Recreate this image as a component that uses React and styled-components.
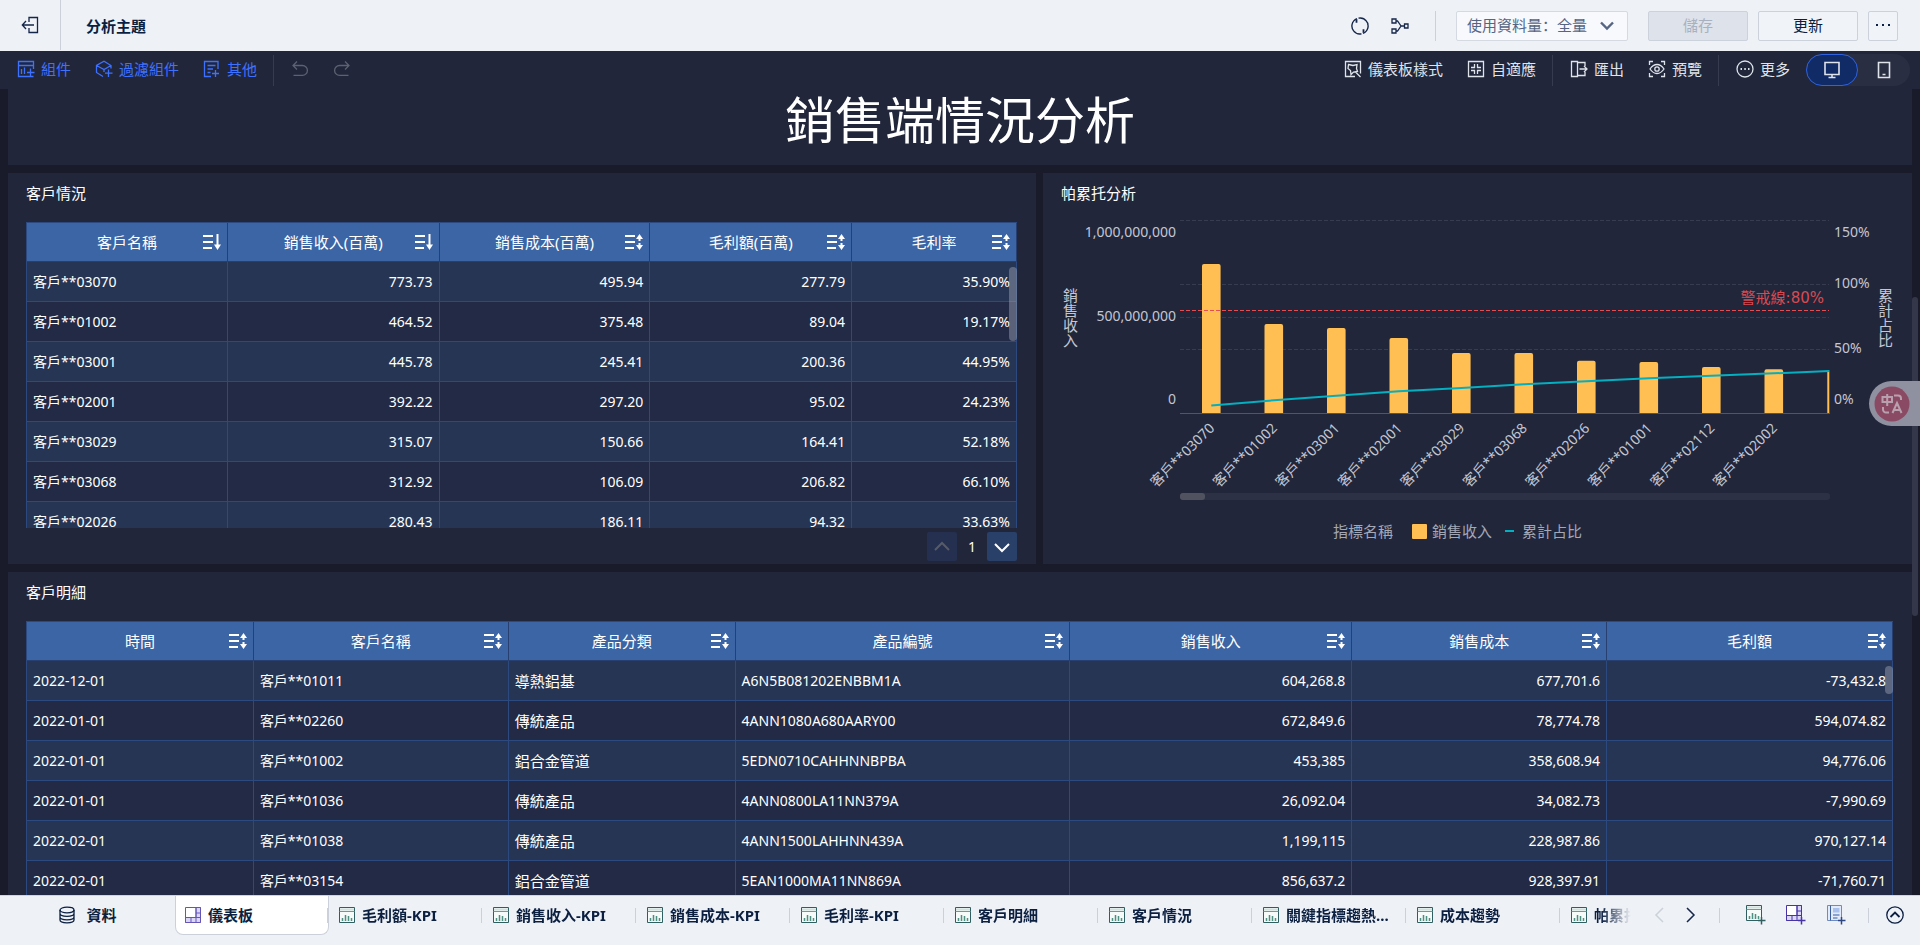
import styled, { createGlobalStyle } from "styled-components";

const customerColumns = [
  { label: "客戶名稱", width: 201, sort: "down" },
  { label: "銷售收入(百萬)", width: 212, sort: "down", number: true },
  { label: "銷售成本(百萬)", width: 211, sort: "both", number: true },
  { label: "毛利額(百萬)", width: 202, sort: "both", number: true },
  { label: "毛利率", width: 165, sort: "both", number: true },
];

const customerRows = [
  ["客戶**03070", "773.73", "495.94", "277.79", "35.90%"],
  ["客戶**01002", "464.52", "375.48", "89.04", "19.17%"],
  ["客戶**03001", "445.78", "245.41", "200.36", "44.95%"],
  ["客戶**02001", "392.22", "297.20", "95.02", "24.23%"],
  ["客戶**03029", "315.07", "150.66", "164.41", "52.18%"],
  ["客戶**03068", "312.92", "106.09", "206.82", "66.10%"],
  ["客戶**02026", "280.43", "186.11", "94.32", "33.63%"],
];

const detailColumns = [
  { label: "時間", width: 227, sort: "both" },
  { label: "客戶名稱", width: 255, sort: "both" },
  { label: "產品分類", width: 227, sort: "both", large: true },
  { label: "產品編號", width: 335, sort: "both" },
  { label: "銷售收入", width: 282, sort: "both", number: true },
  { label: "銷售成本", width: 255, sort: "both", number: true },
  { label: "毛利額", width: 286, sort: "both", number: true },
];

const detailRows = [
  ["2022-12-01", "客戶**01011", "導熱鋁基", "A6N5B081202ENBBM1A", "604,268.8", "677,701.6", "-73,432.8"],
  ["2022-01-01", "客戶**02260", "傳統產品", "4ANN1080A680AARY00", "672,849.6", "78,774.78", "594,074.82"],
  ["2022-01-01", "客戶**01002", "鋁合金管道", "5EDN0710CAHHNNBPBA", "453,385", "358,608.94", "94,776.06"],
  ["2022-01-01", "客戶**01036", "傳統產品", "4ANN0800LA11NN379A", "26,092.04", "34,082.73", "-7,990.69"],
  ["2022-02-01", "客戶**01038", "傳統產品", "4ANN1500LAHHNN439A", "1,199,115", "228,987.86", "970,127.14"],
  ["2022-02-01", "客戶**03154", "鋁合金管道", "5EAN1000MA11NN869A", "856,637.2", "928,397.91", "-71,760.71"],
];

// top = bar top, line = cumulative share, both in chart units
const pareto = [
  { name: "客戶**03070", top: 51, line: 192.5 },
  { name: "客戶**01002", top: 111, line: 187.3 },
  { name: "客戶**03001", top: 115, line: 182.7 },
  { name: "客戶**02001", top: 125, line: 178.3 },
  { name: "客戶**03029", top: 140, line: 175 },
  { name: "客戶**03068", top: 140, line: 171.3 },
  { name: "客戶**02026", top: 147.7, line: 168.3 },
  { name: "客戶**01001", top: 149, line: 165.3 },
  { name: "客戶**02112", top: 154, line: 162.8 },
  { name: "客戶**02002", top: 156.3, line: 160.3 },
];

const tabs = [
  "毛利額-KPI",
  "銷售收入-KPI",
  "銷售成本-KPI",
  "毛利率-KPI",
  "客戶明細",
  "客戶情況",
  "關鍵指標趨熱...",
  "成本趨勢",
  "帕累托分析",
];

export default function App() {
  return (
    <Page>
      <GlobalStyle />
      <Header>
        <BackButton aria-label="返回">
          <BackIcon />
        </BackButton>
        <PageTitle>分析主題</PageTitle>
        <HeaderActions>
          <IconButton aria-label="重新整理">
            <RefreshIcon />
          </IconButton>
          <IconButton aria-label="血緣">
            <FlowIcon />
          </IconButton>
          <HeaderDivider />
          <SelectBox>
            <Select aria-label="使用資料量" defaultValue="all">
              <option value="all">使用資料量：全量</option>
            </Select>
            <SelectArrow viewBox="0 0 18 18">
              <path d="M3 5.5l6 6 6-6" />
            </SelectArrow>
          </SelectBox>
          <HeaderButton $width={100} disabled>
            儲存
          </HeaderButton>
          <HeaderButton $width={100}>更新</HeaderButton>
          <HeaderButton $width={30} aria-label="更多操作">
            <DotsIcon />
          </HeaderButton>
        </HeaderActions>
      </Header>

      <Toolbar>
        <ToolGroup>
          <ToolButton $accent>
            <WidgetIcon />
            組件
          </ToolButton>
          <ToolButton $accent>
            <FilterIcon />
            過濾組件
          </ToolButton>
          <ToolButton $accent>
            <OtherIcon />
            其他
          </ToolButton>
        </ToolGroup>
        <ToolDivider />
        <ToolGroup>
          <ToolButton $muted aria-label="復原">
            <UndoIcon />
          </ToolButton>
          <ToolButton $muted aria-label="重做">
            <RedoIcon />
          </ToolButton>
        </ToolGroup>
        <Spacer />
        <ToolGroup>
          <ToolButton>
            <StyleIcon />
            儀表板樣式
          </ToolButton>
          <ToolButton>
            <FitIcon />
            自適應
          </ToolButton>
        </ToolGroup>
        <ToolDivider />
        <ToolGroup>
          <ToolButton>
            <ExportIcon />
            匯出
          </ToolButton>
          <ToolButton>
            <PreviewIcon />
            預覽
          </ToolButton>
        </ToolGroup>
        <ToolDivider />
        <ToolButton>
          <MoreIcon />
          更多
        </ToolButton>
        <DeviceSwitch>
          <DeviceButton $active aria-label="電腦">
            <MonitorIcon />
          </DeviceButton>
          <DeviceButton aria-label="手機">
            <PhoneIcon />
          </DeviceButton>
        </DeviceSwitch>
      </Toolbar>

      <Canvas>
        <Banner>
          <BannerTitle>銷售端情況分析</BannerTitle>
        </Banner>
        <Row>
          <Panel>
            <PanelTitle>客戶情況</PanelTitle>
            <PanelBody>
              <TableClip>
                <DataTable columns={customerColumns} rows={customerRows} />
                <Thumb $length={74} />
              </TableClip>
              <Pager>
                <PagerButton disabled aria-label="上一頁">
                  <svg viewBox="0 0 18 18">
                    <path d="M2 12l7-7 7 7" />
                  </svg>
                </PagerButton>
                <PagerNumber>1</PagerNumber>
                <PagerButton aria-label="下一頁">
                  <svg viewBox="0 0 18 18">
                    <path d="M2 6l7 7 7-7" />
                  </svg>
                </PagerButton>
              </Pager>
            </PanelBody>
          </Panel>
          <Panel>
            <PanelTitle>帕累托分析</PanelTitle>
            <ParetoChart />
          </Panel>
        </Row>
        <Panel>
          <PanelTitle>客戶明細</PanelTitle>
          <PanelBody>
            <TableFrame>
              <DataTable columns={detailColumns} rows={detailRows} />
              <Thumb $length={28} />
            </TableFrame>
          </PanelBody>
        </Panel>
        <PageThumb />
        <TranslateButton aria-label="翻譯">
          <TranslateIcon />
        </TranslateButton>
      </Canvas>

      <Footer>
        <DataTab>
          <DatabaseIcon />
          資料
        </DataTab>
        <TabList>
          <Tab $active>
            <DashboardIcon />
            儀表板
          </Tab>
          {tabs.map((tab) => {
            return (
              <Tab key={tab}>
                <ChartIcon />
                {tab}
              </Tab>
            );
          })}
        </TabList>
        <FooterTools>
          <FooterButton $disabled aria-label="向左">
            <svg width="18" height="18" viewBox="0 0 18 18">
              <path d="M12 2L5 9l7 7" />
            </svg>
          </FooterButton>
          <FooterButton aria-label="向右">
            <svg width="18" height="18" viewBox="0 0 18 18">
              <path d="M6 2l7 7-7 7" />
            </svg>
          </FooterButton>
        </FooterTools>
        <FooterDivider />
        <FooterTools $wide>
          <FooterButton aria-label="新增組件">
            <ChartIcon plus />
          </FooterButton>
          <FooterButton aria-label="新增儀表板">
            <DashboardIcon plus />
          </FooterButton>
          <FooterButton aria-label="新增報告">
            <ReportIcon />
          </FooterButton>
        </FooterTools>
        <FooterDivider />
        <CollapseButton aria-label="收起">
          <CollapseIcon />
        </CollapseButton>
      </Footer>
    </Page>
  );
}

function DataTable({ columns, rows }) {
  const total = columns.reduce((sum, column) => sum + column.width, 0);
  return (
    <Table>
      <colgroup>
        {columns.map((column) => {
          return <Col key={column.label} $share={(column.width / total) * 100} />;
        })}
      </colgroup>
      <thead>
        <tr>
          {columns.map((column) => {
            return (
              <HeadCell key={column.label}>
                <HeadContent>
                  <span />
                  <span>{column.label}</span>
                  <SortButton aria-label="排序">
                    <SortIcon type={column.sort} />
                  </SortButton>
                </HeadContent>
              </HeadCell>
            );
          })}
        </tr>
      </thead>
      <tbody>
        {rows.map((row, index) => {
          return (
            <BodyRow key={index}>
              {row.map((value, i) => {
                return (
                  <Cell key={i} $number={columns[i].number} $large={columns[i].large}>
                    {value}
                  </Cell>
                );
              })}
            </BodyRow>
          );
        })}
      </tbody>
    </Table>
  );
}

function ParetoChart() {
  const center = (index) => 168.3 + index * 62.5;
  const points = pareto.map((item, i) => `${center(i)},${item.line}`).join(" ");
  return (
    <Chart viewBox="0 0 869 351" role="img" aria-label="帕累托分析">
      {[7.5, 71.5, 104.5, 136.5].map((y) => {
        return <line key={y} className="grid" x1="137" x2="786" y1={y} y2={y} />;
      })}
      <line className="axis" x1="137" x2="787" y1="200.5" y2="200.5" />
      {pareto.map((item, i) => {
        return (
          <path
            key={item.name}
            fill="#ffbf52"
            d={`M${center(i) - 9.3} 200V${item.top + 2}q0-2 2-2h14.6q2 0 2 2V200z`}
          />
        );
      })}
      <rect x="784.3" y="159" width="2" height="41" fill="#ffbf52" />
      <polyline className="line" points={`${points} 786.5,158`} />
      <line className="warn" x1="137" x2="786" y1="97.5" y2="97.5" />
      <text className="warnText" x="781" y="90" textAnchor="end">
        警戒線:80%
      </text>

      <text x="133" y="24" textAnchor="end">1,000,000,000</text>
      <text x="133" y="108" textAnchor="end">500,000,000</text>
      <text x="133" y="191" textAnchor="end">0</text>
      <text x="791" y="24">150%</text>
      <text x="791" y="75">100%</text>
      <text x="791" y="140">50%</text>
      <text x="791" y="191">0%</text>
      <text className="name" x="27" y="75">銷售收入</text>
      <text className="name" x="842" y="75">累計占比</text>

      {pareto.map((item, i) => {
        const x = center(i) + 4;
        return (
          <text key={item.name} x={x} y="216" textAnchor="end" transform={`rotate(-45 ${x} 216)`}>
            {item.name}
          </text>
        );
      })}

      <rect x="137" y="280" width="650" height="7" rx="3" fill="#2d3145" />
      <rect x="137" y="280" width="25" height="7" rx="3" fill="#50535f" />

      <text className="legend" x="290" y="324">指標名稱</text>
      <rect x="369" y="311" width="15" height="15" rx="1" fill="#ffbf52" />
      <text className="legend" x="389" y="324">銷售收入</text>
      <line className="line" x1="462" x2="471" y1="318" y2="318" />
      <text className="legend" x="479" y="324">累計占比</text>
    </Chart>
  );
}

function SortIcon({ type }) {
  return (
    <svg width="18" height="18" viewBox="0 0 18 18" fill="none" stroke="#fff" strokeWidth="2">
      <path d="M0 3h10M0 9h10M0 15h9" />
      {type === "down" ? (
        <>
          <path d="M14.500 1v12" />
          <path d="M11 11.500h7L14.500 17z" fill="#fff" stroke="none" />
        </>
      ) : (
        <>
          <path d="M14.500 5v3M14.500 10v3" />
          <path d="M11 6h7L14.500 1zM11 12h7L14.500 17z" fill="#fff" stroke="none" />
        </>
      )}
    </svg>
  );
}

function BackIcon() {
  return (
    <Icon viewBox="0 0 18 18">
      <path d="M8 6V1.500h8.500v15H8V12M13 9H1.500M5 5L1.300 9 5 13" />
    </Icon>
  );
}

function RefreshIcon() {
  return (
    <Icon viewBox="0 0 18 18">
      <path d="M3.300 14.700A8 8 0 0 1 6 1.600M7.500 1.200A8 8 0 0 1 16.300 12.500M14.700 3.300A8 8 0 0 1 12 16.400M10.500 16.800A8 8 0 0 1 1.700 5.500" />
      <path d="M5.500 2.200v3.500M12.500 15.800v-3.500" strokeWidth="1.800" />
    </Icon>
  );
}

function FlowIcon() {
  return (
    <Icon viewBox="0 0 18 18">
      <path d="M1 2h4v4H1zM1 12h4v4H1zM13.500 7H17v4h-3.500zM5 4h1.500L10 9l-3.500 5H5M10 9h3.500" />
    </Icon>
  );
}

function DotsIcon() {
  return (
    <svg width="18" height="18" viewBox="0 0 18 18" fill="currentColor">
      <path d="M2 8h2v2H2zM8 8h2v2H8zM14 8h2v2h-2z" />
    </svg>
  );
}

function WidgetIcon() {
  return (
    <Icon viewBox="0 0 18 18">
      <path d="M16.500 9v-7.500h-15v15h15M1.500 5.500h15M4.500 9v5M7.500 7.500V14M13.500 8.500v8M10 12.500h7.500" />
    </Icon>
  );
}

function FilterIcon() {
  return (
    <Icon viewBox="0 0 18 18">
      <path d="M8 16.500L1.500 12.500v-7L9 1.300l7 4.200v3M1.500 5.500L9 9.500l7-4M9 9.500v2.500M13.500 9.500v7.500M10 13.200h7.500" />
    </Icon>
  );
}

function OtherIcon() {
  return (
    <Icon viewBox="0 0 18 18">
      <path d="M8 16.500H1.500v-15h13.500V9M4.500 5.500h8M4.500 9h5.500M4.500 12.500h3M12.500 10v7M9 13.500h7" />
    </Icon>
  );
}

function UndoIcon() {
  return (
    <Icon viewBox="0 0 18 18">
      <path d="M6 1.500L2 5.500l4 4M2 5.500h9.500a4.800 4.800 0 0 1 0 9.800H2.500" />
    </Icon>
  );
}

function RedoIcon() {
  return (
    <Icon viewBox="0 0 18 18">
      <path d="M12 1.500l4 4-4 4M16 5.500H6.500a4.800 4.800 0 0 0 0 9.800h9" />
    </Icon>
  );
}

function StyleIcon() {
  return (
    <Icon viewBox="0 0 18 18">
      <path d="M11 16.500H1.500v-15h15v12M4.500 4.500l4.500 1 4-1-.5 4 1 3-4 .5-2.500 2.500-.5-4L4 8.500zM11.500 12l5 5" />
    </Icon>
  );
}

function FitIcon() {
  return (
    <Icon viewBox="0 0 18 18">
      <path d="M1.500 1.500h15v15h-15zM7.500 4v3.500H4M10.500 4v3.500H14M7.500 14v-3.500H4M10.500 14v-3.500H14" />
    </Icon>
  );
}

function ExportIcon() {
  return (
    <Icon viewBox="0 0 18 18">
      <path d="M7.500 1.500h-6v15h6zM7.500 2.500h7.500V6M7.500 15.500h7.500V12M9.500 9h7.500M14 6l3 3-3 3" />
    </Icon>
  );
}

function PreviewIcon() {
  return (
    <Icon viewBox="0 0 18 18">
      <path d="M1.500 5V1.500H5M13 1.500h3.500V5M16.500 13v3.500H13M5 16.500H1.500V13M2 9c2-3 4-4.500 7-4.500S14 6 16 9c-2 3-4 4.500-7 4.500S4 12 2 9z" />
      <circle cx="9" cy="9" r="2.200" />
    </Icon>
  );
}

function MoreIcon() {
  return (
    <Icon viewBox="0 0 18 18">
      <circle cx="9" cy="9" r="8" />
      <path d="M4.500 9h1.500M8.300 9h1.500M12 9h1.500" strokeWidth="1.800" />
    </Icon>
  );
}

function MonitorIcon() {
  return (
    <Icon viewBox="0 0 18 18">
      <path d="M2 1.500h14v12H2zM9 13.500v3M5.500 16.500h7" strokeWidth="1.600" />
    </Icon>
  );
}

function PhoneIcon() {
  return (
    <Icon viewBox="0 0 18 18">
      <path d="M3.500 1.500h11v15h-11zM7.500 13.500h3" strokeWidth="1.600" />
    </Icon>
  );
}

function DatabaseIcon() {
  return (
    <Icon viewBox="0 0 18 18">
      <ellipse cx="9" cy="4" rx="7" ry="2.800" />
      <path d="M2 4v10c0 1.600 3 2.800 7 2.800s7-1.200 7-2.800V4M2 7.500c0 1.600 3 2.800 7 2.800s7-1.200 7-2.800M2 11c0 1.600 3 2.800 7 2.800s7-1.200 7-2.800" />
    </Icon>
  );
}

function DashboardIcon({ plus }) {
  return (
    <svg width={plus ? 20 : 16} height={plus ? 20 : 16} viewBox={plus ? "0 0 20 20" : "0 0 16 16"} fill="none" stroke={plus ? "#4634a8" : "#6456b8"}>
      <path d="M.5.500h15v15H.5z" fill="#fff" />
      <path d="M11 .5h4.500v15H.5v-5H11z" fill="#dcd6f8" />
      <path d="M11 .5v15M.5 10.500h15M6 10.500v5M11 6h4.500" />
      {plus && <path d="M15.500 12v7.500M12 15.500h7.500" strokeWidth="1.500" />}
    </svg>
  );
}

function ChartIcon({ plus }) {
  return (
    <svg width={plus ? 20 : 16} height={plus ? 20 : 16} viewBox={plus ? "0 0 20 20" : "0 0 16 16"} fill="none" stroke="#2f5f60">
      <path d="M.5.500h15v15H.5z" fill="#f6faf9" />
      <path d="M1 2.500h14" stroke="#cfe3de" strokeWidth="2" />
      <path d="M.5 4.500h15" stroke="#6f9a93" />
      <path d="M3.500 14v-3M6.500 14V8M9.500 14V9M12.500 14v-3" stroke="#4d8f80" strokeWidth="1.500" />
      {plus && <path d="M15.500 12v7.500M12 15.500h7.500" strokeWidth="1.500" />}
    </svg>
  );
}

function ReportIcon() {
  return (
    <svg width="20" height="20" viewBox="0 0 20 20" fill="none" stroke="#6d8cc4">
      <path d="M1.500.500h14v15h-14z" fill="#e3ebfa" />
      <path d="M4.500.500v15" stroke="#3c5f9f" />
      <path d="M7 3h6.500v4.500H7z" fill="#a9c1ec" stroke="none" />
      <path d="M7 10h6.500M7 13h4.500" strokeWidth="1.500" />
      <path d="M15.500 12v7.500M12 15.500h7.500" stroke="#2c4784" strokeWidth="1.500" />
    </svg>
  );
}

function CollapseIcon() {
  return (
    <Icon viewBox="0 0 18 18">
      <circle cx="9" cy="9" r="8.200" />
      <path d="M4.500 11L9 6.500l4.500 4.500" strokeWidth="1.800" />
    </Icon>
  );
}

function TranslateIcon() {
  return (
    <svg width="36" height="36" viewBox="0 0 36 36" fill="none" stroke="#b9a0ae" strokeWidth="2">
      <circle cx="18" cy="18" r="17.500" fill="#8b4a63" stroke="none" />
      <path d="M8.500 11h9.500v5H8.500zM13.200 8v12M20 9.500h4a3 3 0 0 1 3 3V14M9 21v2.500a3 3 0 0 0 3 3h3M18.500 27L23 17l4.500 10M20 24h6" />
    </svg>
  );
}

const GlobalStyle = createGlobalStyle`
  * {
    box-sizing: border-box;
  }

  body {
    margin: 0;
    background: #191b2a;
    font-family: "Noto Sans", "Noto Sans CJK SC", sans-serif;
    font-size: 15px;
    line-height: 20px;
  }

  button,
  select {
    margin: 0;
    padding: 0;
    border: 0;
    background: none;
    color: inherit;
    font: inherit;
  }

  button {
    display: flex;
    align-items: center;
    justify-content: center;
  }
`;

const Page = styled.div`
  display: flex;
  flex-direction: column;
  height: 100vh;
  overflow: hidden;
`;

const Icon = styled.svg`
  width: 18px;
  height: 18px;
  flex: none;
  fill: none;
  stroke: currentColor;
  stroke-width: 1.3;
`;

const Spacer = styled.div`
  flex: 1;
`;

const Header = styled.header`
  display: flex;
  align-items: center;
  flex: none;
  height: 51px;
  background: #eef1f6;
  color: #14264a;
`;

const BackButton = styled.button`
  width: 61px;
  height: 50px;
  align-self: flex-start;
  border-right: 1px solid #ccd0d9;
`;

const PageTitle = styled.h1`
  margin: 0;
  padding-left: 25px;
  flex: 1;
  color: #0b1f41;
  font-size: 15px;
  font-weight: 700;
`;

const HeaderActions = styled.div`
  display: flex;
  align-items: center;
  gap: 10px;
  padding-right: 22px;
`;

const IconButton = styled.button`
  width: 30px;
  height: 30px;
`;

const HeaderDivider = styled.div`
  width: 1px;
  height: 30px;
  margin: 0 10px;
  background: #ccd0d9;
`;

const SelectBox = styled.div`
  position: relative;
  width: 172px;
  height: 30px;
  margin-right: 10px;
`;

const Select = styled.select`
  width: 100%;
  height: 30px;
  padding: 0 10px 2px;
  appearance: none;
  border: 1px solid #d5d9e2;
  border-radius: 2px;
  background: #f7f9fc;
  color: #566582;
`;

const SelectArrow = styled.svg`
  position: absolute;
  top: 6px;
  right: 12px;
  width: 18px;
  height: 18px;
  fill: none;
  stroke: #566582;
  stroke-width: 2.4;
  pointer-events: none;
`;

const HeaderButton = styled.button`
  width: ${({ $width }) => $width}px;
  height: 30px;
  padding-bottom: 2px;
  border: 1px solid #ccd2dc;
  border-radius: 2px;
  background: #f0f3f8;
  color: #0b1f41;

  &:disabled {
    background: #dee2ea;
    color: #a9b1c0;
  }
`;

const Toolbar = styled.div`
  display: flex;
  align-items: center;
  flex: none;
  height: 38px;
  padding: 0 10px 0 17px;
  background: #21263b;
`;

const ToolGroup = styled.div`
  display: flex;
  align-items: center;
  gap: 24px;
`;

const ToolButton = styled.button`
  gap: 6px;
  padding-bottom: 2px;
  white-space: nowrap;
  color: ${({ $accent, $muted }) => {
    if ($accent) return "#3f71ff";
    return $muted ? "#5d6170" : "#dfe3ea";
  }};
`;

const ToolDivider = styled.div`
  width: 1px;
  height: 31px;
  margin: 0 17px 0 16px;
  background: #373b4f;
`;

const DeviceSwitch = styled.div`
  display: flex;
  margin-left: 16px;
  border-radius: 16px;
  background: #2a2e42;
`;

const DeviceButton = styled.button`
  width: 52px;
  height: 32px;
  border: 1px solid ${({ $active }) => ($active ? "#2f62e0" : "transparent")};
  border-radius: 16px;
  background: ${({ $active }) => ($active ? "#112b66" : "transparent")};
  color: #dfe3ea;
`;

const Canvas = styled.main`
  position: relative;
  display: flex;
  flex-direction: column;
  gap: 8px;
  flex: 1;
  min-height: 0;
  padding: 0 8px;
  overflow: hidden;
`;

const Banner = styled.section`
  flex: none;
  padding-bottom: 14px;
  background: #21263b;
`;

const BannerTitle = styled.h2`
  margin: 0;
  color: #fff;
  font-size: 50px;
  font-weight: 400;
  line-height: 62px;
  text-align: center;
`;

const Row = styled.div`
  display: grid;
  grid-template-columns: 1028fr 869fr;
  gap: 7px;
  flex: none;
`;

const Panel = styled.section`
  flex: none;
  min-width: 0;
  background: #21263b;
`;

const PanelTitle = styled.h3`
  margin: 0;
  padding: 10px 18px;
  color: #fff;
  font-size: 15px;
  font-weight: 400;
  line-height: 20px;
`;

const PanelBody = styled.div`
  padding: 9px 19px 0 18px;
`;

const TableFrame = styled.div`
  position: relative;
`;

const TableClip = styled(TableFrame)`
  height: 306px;
  overflow: hidden;
`;

const Table = styled.table`
  width: 100%;
  table-layout: fixed;
  border-collapse: separate;
  border-spacing: 0;
  border-top: 1px solid #2c4a80;
  border-left: 1px solid #2c4a80;
  color: #fff;
`;

const Col = styled.col`
  width: ${({ $share }) => $share}%;
`;

const HeadCell = styled.th`
  height: 39px;
  padding: 0 6px;
  border-right: 1px solid #28406f;
  border-bottom: 1px solid #28406f;
  background: #3b65a4;
  font-weight: 400;
`;

const HeadContent = styled.div`
  display: grid;
  grid-template-columns: 1fr auto 1fr;
  align-items: center;
`;

const SortButton = styled.button`
  justify-self: end;
`;

const BodyRow = styled.tr`
  background: #222a45;

  &:nth-child(odd) {
    background: #263553;
  }
`;

const Cell = styled.td`
  height: 40px;
  padding: 0 6px;
  border-right: 1px solid #2c4a80;
  border-bottom: 1px solid #2c4a80;
  font-size: ${({ $large }) => ($large ? 15 : 14)}px;
  text-align: ${({ $number }) => ($number ? "right" : "left")};
  white-space: nowrap;
`;

const Thumb = styled.div`
  position: absolute;
  top: 45px;
  right: 0;
  width: 8px;
  height: ${({ $length }) => $length}px;
  border-radius: 4px;
  background: rgba(170, 175, 190, 0.42);
`;

const Pager = styled.div`
  display: flex;
  align-items: center;
  justify-content: flex-end;
  padding-top: 4px;
`;

const PagerButton = styled.button`
  width: 30px;
  height: 29px;
  border-radius: 2px;
  background: #294069;

  svg {
    width: 18px;
    height: 18px;
    fill: none;
    stroke: #fff;
    stroke-width: 2;
  }

  &:disabled {
    background: #253050;
  }

  &:disabled svg {
    stroke: #575b68;
  }
`;

const PagerNumber = styled.span`
  width: 30px;
  color: #fff;
  font-size: 14px;
  text-align: center;
`;

const Chart = styled.svg`
  display: block;
  width: 100%;
  fill: none;

  text {
    fill: #c3c7d3;
    font-size: 14px;
  }

  .grid {
    stroke: #383c50;
    stroke-dasharray: 4 2;
  }

  .axis {
    stroke: #50556a;
  }

  .line {
    stroke: #04afc0;
    stroke-width: 2;
  }

  .warn {
    stroke: #e64d52;
    stroke-dasharray: 4 2;
  }

  .warnText {
    fill: #d94a50;
    font-family: "DejaVu Sans", "Noto Sans CJK SC", sans-serif;
    font-size: 15px;
  }

  .name {
    font-size: 15px;
    writing-mode: vertical-rl;
  }

  .legend {
    fill: #a4a8b4;
    font-size: 15px;
  }
`;

const PageThumb = styled.div`
  position: absolute;
  top: 208px;
  right: 2px;
  width: 6px;
  height: 319px;
  border-radius: 3px;
  background: #34374a;
`;

const TranslateButton = styled.button`
  position: absolute;
  top: 292px;
  right: 0;
  width: 51px;
  height: 45px;
  padding-left: 5px;
  justify-content: flex-start;
  border-radius: 23px 0 0 23px;
  background: #9091a0;
`;

const Footer = styled.footer`
  display: flex;
  flex: none;
  height: 50px;
  border-top: 1px solid #d0d4dd;
  background: #eef1f6;
  color: #0b1f41;
  font-weight: 700;
`;

const DataTab = styled.button`
  width: 175px;
  height: 38px;
  flex: none;
  gap: 10px;
`;

const TabList = styled.nav`
  display: flex;
  flex: 1;
  min-width: 0;
  overflow: hidden;
  mask-image: linear-gradient(to left, transparent, #000 30px);
`;

const Tab = styled.button`
  position: relative;
  flex: none;
  width: 154px;
  height: 39px;
  padding-left: 9px;
  gap: 7px;
  justify-content: flex-start;
  border: 1px solid ${({ $active }) => ($active ? "#ccd0d9" : "transparent")};
  border-top: 0;
  border-radius: 0 0 8px 8px;
  background: ${({ $active }) => ($active ? "#fff" : "transparent")};
  white-space: nowrap;

  &::after {
    position: absolute;
    top: 12px;
    right: 0;
    width: 1px;
    height: 15px;
    background: #ccd0d9;
    content: "";
  }
`;

const FooterTools = styled.div`
  display: flex;
  align-items: center;
  height: 38px;
  gap: ${({ $wide }) => ($wide ? 20 : 12)}px;
  padding: 0 ${({ $wide }) => ($wide ? 22 : 20)}px 0 ${({ $wide }) => ($wide ? 26 : 20)}px;
`;

const FooterButton = styled.button`
  svg:not([stroke]) {
    fill: none;
    stroke: ${({ $disabled }) => ($disabled ? "#ccd0d9" : "#14264a")};
    stroke-width: 1.5;
  }
`;

const CollapseButton = styled.button`
  width: 51px;
  height: 38px;
`;

const FooterDivider = styled.div`
  width: 1px;
  height: 15px;
  margin-top: 12px;
  background: #ccd0d9;
`;
